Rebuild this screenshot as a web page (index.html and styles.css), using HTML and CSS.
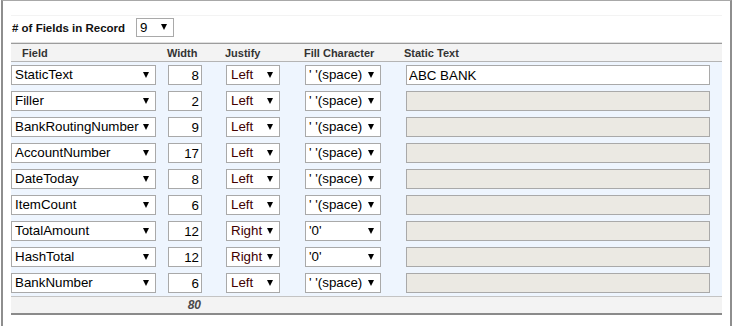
FILE: index.html
```html
<!DOCTYPE html>
<html lang="en">
  <head>
    <meta charset="UTF-8">
    <meta name="viewport" content="width=device-width, initial-scale=1.0">
    <title>Record Layout</title>
    <link rel="stylesheet" href="styles.css">
  </head>
  <body>
    <div class="panel">
      <div class="settings">
        <label class="settingsLabel" for="fieldCount"># of Fields in Record</label>
        <span class="dd ddCount"><select id="fieldCount"><option>9</option></select></span>
      </div>

      <div class="grid head">
        <span class="hField">Field</span>
        <span>Width</span>
        <span>Justify</span>
        <span>Fill Character</span>
        <span class="hStatic">Static Text</span>
      </div>

      <div class="rows">
        <div class="grid">
          <span class="dd ddField"><select><option>StaticText</option></select></span>
          <input class="num" value="8">
          <span class="dd ddJust"><select><option>Left</option></select></span>
          <span class="dd ddFill"><select><option>' '(space)</option></select></span>
          <input class="static" value="ABC BANK">
        </div>
        <div class="grid">
          <span class="dd ddField"><select><option>Filler</option></select></span>
          <input class="num" value="2">
          <span class="dd ddJust"><select><option>Left</option></select></span>
          <span class="dd ddFill"><select><option>' '(space)</option></select></span>
          <input class="static" disabled>
        </div>
        <div class="grid">
          <span class="dd ddField"><select><option>BankRoutingNumber</option></select></span>
          <input class="num" value="9">
          <span class="dd ddJust"><select><option>Left</option></select></span>
          <span class="dd ddFill"><select><option>' '(space)</option></select></span>
          <input class="static" disabled>
        </div>
        <div class="grid">
          <span class="dd ddField"><select><option>AccountNumber</option></select></span>
          <input class="num" value="17">
          <span class="dd ddJust"><select><option>Left</option></select></span>
          <span class="dd ddFill"><select><option>' '(space)</option></select></span>
          <input class="static" disabled>
        </div>
        <div class="grid">
          <span class="dd ddField"><select><option>DateToday</option></select></span>
          <input class="num" value="8">
          <span class="dd ddJust"><select><option>Left</option></select></span>
          <span class="dd ddFill"><select><option>' '(space)</option></select></span>
          <input class="static" disabled>
        </div>
        <div class="grid">
          <span class="dd ddField"><select><option>ItemCount</option></select></span>
          <input class="num" value="6">
          <span class="dd ddJust"><select><option>Left</option></select></span>
          <span class="dd ddFill"><select><option>' '(space)</option></select></span>
          <input class="static" disabled>
        </div>
        <div class="grid">
          <span class="dd ddField"><select><option>TotalAmount</option></select></span>
          <input class="num" value="12">
          <span class="dd ddJust"><select><option>Right</option></select></span>
          <span class="dd ddFill"><select><option>'0'</option></select></span>
          <input class="static" disabled>
        </div>
        <div class="grid">
          <span class="dd ddField"><select><option>HashTotal</option></select></span>
          <input class="num" value="12">
          <span class="dd ddJust"><select><option>Right</option></select></span>
          <span class="dd ddFill"><select><option>'0'</option></select></span>
          <input class="static" disabled>
        </div>
        <div class="grid">
          <span class="dd ddField"><select><option>BankNumber</option></select></span>
          <input class="num" value="6">
          <span class="dd ddJust"><select><option>Left</option></select></span>
          <span class="dd ddFill"><select><option>' '(space)</option></select></span>
          <input class="static" disabled>
        </div>
      </div>

      <div class="grid foot">
        <span></span>
        <span class="total">80</span>
      </div>
    </div>
  </body>
</html>
```

FILE: styles.css
```css
        * {
            box-sizing: border-box;
        }
        body {
            margin: 0;
            font-family: "Liberation Sans", Arial, Helvetica, sans-serif;
            color: #000;
            background: #fff;
        }
        input, select {
            font-family: inherit;
            font-size: 13.33px;
            margin: 0;
        }
        .panel {
            width: 731px;
            height: 340px;
            margin-left: 1px;
            padding: 14px 8px 0;
            border-top: 1px solid #a8a8a8;
            border-left: 2px solid #8e8e8e;
            border-right: 2px solid #8e8e8e;
        }
        .settings {
            display: flex;
            align-items: center;
            gap: 11px;
            padding: 2px 0 5px 1px;
            border-top: 1px solid #f3f3f3;
            border-bottom: 1px solid #e0e0e0;
        }
        .settingsLabel {
            font-size: 11.5px;
            font-weight: bold;
            color: #111;
        }

        /* dropdowns with the little black arrow */
        .dd {
            position: relative;
            display: block;
        }
        .dd select {
            appearance: none;
            -webkit-appearance: none;
            display: block;
            width: 100%;
            height: 20px;
            padding: 0 0 0 3px;
            border: 1px solid #a9a9a9;
            border-radius: 0;
            background: #fff;
            color: #000;
            line-height: 18px;
        }
        .dd::after {
            content: "";
            position: absolute;
            right: 7px;
            top: 7px;
            border-left: 3.5px solid transparent;
            border-right: 3.5px solid transparent;
            border-top: 6px solid #000;
            pointer-events: none;
        }
        .ddCount {
            width: 38px;
        }
        .ddCount select {
            height: 19px;
        }
        .ddCount::after {
            top: 6px;
            right: 7px;
        }
        .ddField {
            width: 145px;
        }
        .ddJust {
            width: 54px;
        }
        .ddJust select {
            padding-left: 4px;
            color: #420000;
        }
        .ddFill {
            width: 76px;
        }

        .grid {
            display: grid;
            grid-template-columns: 157px 58px 79px 101px 1fr;
            align-items: center;
        }
        .head {
            height: 19px;
            border-top: 1px solid #9c9c9c;
            border-bottom: 1px solid #b4b4b4;
            background: #f3f3f3;
            font-size: 11px;
            font-weight: bold;
            color: #333;
        }
        .head span {
            margin-left: -1px;
        }
        .head .hField {
            margin-left: 0;
            padding-left: 11px;
        }
        .head .hStatic {
            margin-left: -2px;
        }
        .rows {
            display: flex;
            flex-direction: column;
            gap: 6px;
            padding: 3px 0 3px;
            background: #eef5fe;
        }
        .num, .static {
            height: 20px;
            border: 1px solid #a9a9a9;
            border-radius: 0;
            color: #000;
        }
        .num {
            width: 34px;
            padding: 0 2px 0 0;
            text-align: right;
        }
        .static {
            width: 304px;
            padding: 0 2px;
            background: #fff;
        }
        .static:disabled {
            background: #ebe9e3;
        }
        .foot {
            height: 19px;
            border-top: 1px solid #c4c4c4;
            border-bottom: 2px solid #8a8a8a;
            background: #f3f3f3;
        }
        .total {
            width: 34px;
            padding-right: 1px;
            text-align: right;
            font-size: 12px;
            font-weight: bold;
            font-style: italic;
            color: #4a4a4a;
        }
```
